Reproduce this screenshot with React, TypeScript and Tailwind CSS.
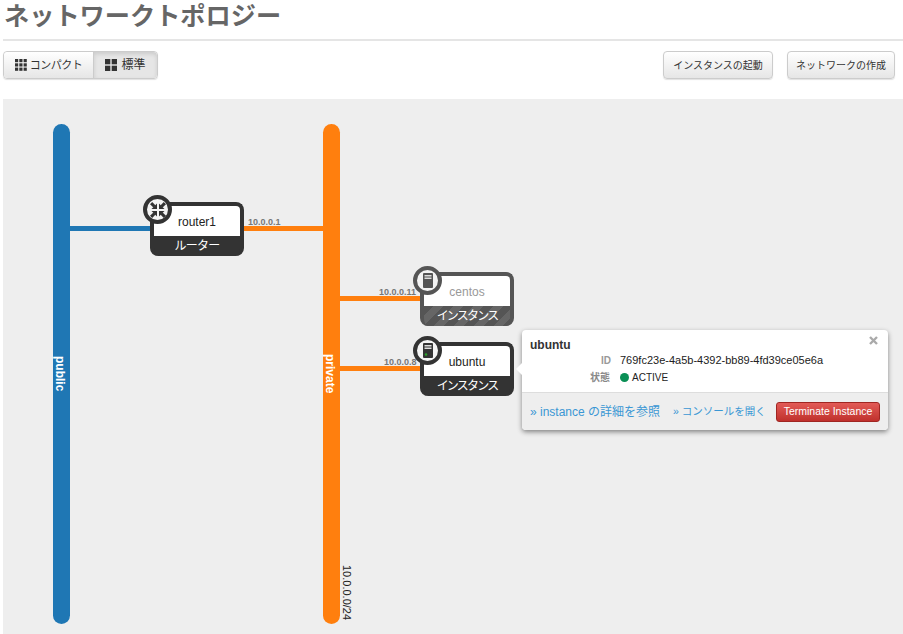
import React from 'react'

const font = { fontFamily: '"Liberation Sans", "Noto Sans CJK JP", sans-serif' }

function DeviceIcon({ active }: { active?: boolean }) {
  return (
    <svg width="10" height="15" viewBox="0 0 10 15">
      <rect x="0" y="0" width="10" height="15" rx="1" fill={active ? '#333' : '#555'} />
      <rect x="1.5" y="2" width="7" height="1.5" fill="#ddd" />
      <rect x="1.5" y="4.5" width="7" height="1.5" fill="#ddd" />
      {active && <circle cx="3" cy="11.5" r="1.3" fill="#2ca02c" />}
    </svg>
  )
}

function RouterIcon() {
  return (
    <svg width="16" height="16" viewBox="0 0 16 16" fill="#333" stroke="none">
      {[0, 90, 180, 270].map((r) => (
        <g key={r} transform={`rotate(${r} 8 8)`}>
          <path d="M7 7V1.5L1.5 7z" />
          <path d="M0 2.2 2.2 0 5.6 3.4 3.4 5.6z" />
        </g>
      ))}
    </svg>
  )
}

function Node({
  className,
  name,
  label,
  labelClass,
  icon,
  dim,
  circleClass,
}: {
  className: string
  name: string
  label: string
  labelClass: string
  icon: React.ReactNode
  dim?: boolean
  circleClass: string
}) {
  return (
    <div className={`absolute w-[94px] h-[54px] ${className}`}>
      <div
        className={`w-full h-full rounded-[8px] flex flex-col overflow-hidden border-[4px] border-b-0 ${
          dim ? 'border-[#555] bg-[#555]' : 'border-[#333] bg-[#333]'
        }`}
      >
        <div
          className={`h-[30px] bg-white rounded-t-[3px] flex items-center justify-center text-[12px] pt-[2px] mx-[-1px] ${
            dim ? 'text-[#999]' : 'text-[#222]'
          }`}
        >
          {name}
        </div>
        <div
          className={`flex-1 text-white text-[12px] leading-[18px] pt-[1px] text-center whitespace-nowrap ${labelClass}`}
          style={
            dim
              ? {
                  backgroundImage:
                    'repeating-linear-gradient(135deg, #555 0 7px, #666 7px 14px)',
                }
              : undefined
          }
        >
          {label}
        </div>
      </div>
      <div
        className={`absolute w-[29px] h-[29px] rounded-full bg-[#f4f4f4] border-[4px] flex items-center justify-center ${circleClass} ${
          dim ? 'border-[#555]' : 'border-[#333]'
        }`}
      >
        {icon}
      </div>
    </div>
  )
}

function Grid3() {
  return (
    <svg width="12" height="12" viewBox="0 0 12 12" fill="#333">
      {[0, 4.3, 8.6].flatMap((y) =>
        [0, 4.3, 8.6].map((x) => <rect key={`${x}-${y}`} x={x} y={y} width="3.2" height="3.2" />)
      )}
    </svg>
  )
}

function Grid2() {
  return (
    <svg width="12" height="12" viewBox="0 0 12 12" fill="#333">
      <rect x="0" y="0" width="5.3" height="5.3" />
      <rect x="6.7" y="0" width="5.3" height="5.3" />
      <rect x="0" y="6.7" width="5.3" height="5.3" />
      <rect x="6.7" y="6.7" width="5.3" height="5.3" />
    </svg>
  )
}

const btn =
  'h-[28px] rounded-[4px] border border-[#ccc] bg-gradient-to-b from-white to-[#e6e6e6] text-[10px] text-[#333] shadow-[0_1px_1px_rgba(0,0,0,0.12)]'

export default function App() {
  return (
    <div className="w-[903px] h-[634px] overflow-hidden bg-white flex flex-col pl-[3px]" style={font}>
      <h1 className="h-[41px] shrink-0 border-b-2 border-[#e5e5e5] text-[#666] text-[25.2px] font-bold leading-[32px] pl-[1px]">
        ネットワークトポロジー
      </h1>

      <div className="h-[58px] shrink-0 flex justify-between items-start pt-[10px] pr-[8px]">
        <div className="flex h-[28px] rounded-[4px] border border-[#ccc] shadow-[0_1px_1px_rgba(0,0,0,0.12)] text-[#333]">
          <div className="w-[90px] flex items-center justify-center gap-[3px] text-[11px] tracking-[-0.5px] bg-gradient-to-b from-white to-[#e6e6e6] rounded-l-[4px] border-r border-[#ccc]">
            <Grid3 />
            コンパクト
          </div>
          <div className="w-[63px] flex items-center justify-center gap-[4px] text-[12px] bg-[#e6e6e6] rounded-r-[4px] shadow-[inset_0_2px_4px_rgba(0,0,0,0.12)]">
            <Grid2 />
            標準
          </div>
        </div>
        <div className="flex gap-[14px]">
          <button className={`${btn} w-[110px]`}>インスタンスの起動</button>
          <button className={`${btn} w-[108px]`}>ネットワークの作成</button>
        </div>
      </div>

      {/* free canvas: offsets below are relative to this panel */}
      <div className="relative flex-1 bg-[#eeeeee]">
        <div className="absolute left-[50px] top-[25px] w-[17px] h-[500px] rounded-full bg-[#1f77b4] flex items-center justify-center pr-[4px]">
          <span className="[writing-mode:vertical-rl] text-white text-[12px] font-bold">public</span>
        </div>
        <div className="absolute left-[320px] top-[25px] w-[17px] h-[500px] rounded-full bg-[#ff7f0e] flex items-center justify-center pr-[4px]">
          <span className="[writing-mode:vertical-rl] text-white text-[12px] font-bold">private</span>
        </div>
        <span className="absolute left-[337px] top-[466px] [writing-mode:vertical-rl] text-[11px] leading-[14px] text-[#222]">
          10.0.0.0/24
        </span>

        {/* links */}
        <div className="absolute left-[67px] top-[127px] w-[85px] h-[5px] bg-[#1f77b4]" />
        <div className="absolute left-[238px] top-[127px] w-[84px] h-[5px] bg-[#ff7f0e]" />
        <div className="absolute left-[337px] top-[197px] w-[84px] h-[5px] bg-[#ff7f0e]" />
        <div className="absolute left-[337px] top-[267px] w-[84px] h-[5px] bg-[#ff7f0e]" />

        <span className="absolute left-[245px] top-[118px] text-[9px] leading-[10px] font-bold text-[#777]">10.0.0.1</span>
        <span className="absolute left-[376px] top-[188px] text-[9px] leading-[10px] font-bold text-[#777]">10.0.0.11</span>
        <span className="absolute left-[381px] top-[258px] text-[9px] leading-[10px] font-bold text-[#777]">10.0.0.8</span>

        <Node className="left-[147px] top-[103px]" circleClass="left-[-7px] top-[-7px]" name="router1" label="ルーター" labelClass="tracking-[-0.7px]" icon={<RouterIcon />} />
        <Node className="left-[417px] top-[173px]" circleClass="left-[-7px] top-[-6px]" name="centos" label="インスタンス" labelClass="tracking-[-1.8px]" dim icon={<DeviceIcon />} />
        <Node className="left-[417px] top-[243px]" circleClass="left-[-7px] top-[-6px]" name="ubuntu" label="インスタンス" labelClass="tracking-[-1.8px]" icon={<DeviceIcon active />} />

        {/* balloon */}
        <div className="absolute left-[519px] top-[231px] w-[366px] h-[100px] rounded-[4px] bg-white shadow-[0_2px_5px_rgba(0,0,0,0.45)] text-[11px] text-[#222] flex flex-col">
          <div className="absolute left-[-6px] top-[32px] w-0 h-0 border-y-[7px] border-y-transparent border-r-[7px] border-r-white" />
          <svg className="absolute right-[10px] top-[6px]" width="9" height="9" viewBox="0 0 9 9" stroke="#aaa" strokeWidth="2.4">
            <path d="M1 1l7 7M8 1 1 8" />
          </svg>
          <div className="h-[63px] border-b border-[#ddd] pl-[8px] pt-[7px]">
            <div className="text-[12px] leading-[16px] font-bold text-[#333]">ubuntu</div>
            <div className="flex items-center h-[16px] mt-[-1px]">
              <span className="w-[81px] text-right text-[#999] font-bold text-[10px]">ID</span>
              <span className="ml-[9px] text-[11px] whitespace-nowrap">769fc23e-4a5b-4392-bb89-4fd39ce05e6a</span>
            </div>
            <div className="flex items-center h-[16px] mt-[1px]">
              <span className="w-[80px] text-right text-[#888] font-bold text-[10px]">状態</span>
              <span className="ml-[10px] w-[9px] h-[9px] rounded-full bg-[#0a8f55]" />
              <span className="ml-[3px] text-[10px]">ACTIVE</span>
            </div>
          </div>
          <div className="flex-1 bg-[#eeeeee] rounded-b-[4px] flex items-center pl-[8px] pr-[8px] text-[#3a97d4] whitespace-nowrap">
            <span className="w-[129px] text-[12px]">» instance の詳細を参照</span>
            <span className="ml-[14px] w-[93px] text-[10.5px]">» コンソールを開く</span>
            <span className="ml-[10px] h-[20px] w-[104px] rounded-[3px] border border-[#a02622] bg-gradient-to-b from-[#e25a56] to-[#c0302c] text-white text-[10.5px] flex items-center justify-center">
              Terminate Instance
            </span>
          </div>
        </div>
      </div>
    </div>
  )
}
